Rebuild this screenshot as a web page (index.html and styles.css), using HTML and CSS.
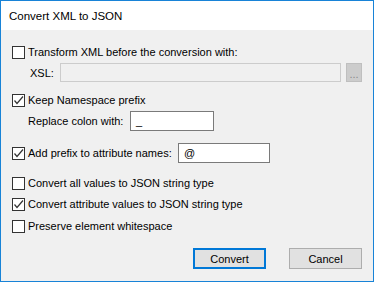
FILE: index.html
```html
<!DOCTYPE html>
<html lang="en">
<head>
  <meta charset="UTF-8" />
  <title>Convert XML to JSON</title>
  <link rel="stylesheet" href="styles.css">
</head>
<body>

  <div class="window">
    <div class="title-bar">Convert XML to JSON</div>

    <div class="content">
      <div class="row row-transform">
        <span class="check"></span>
        <span>Transform XML before the conversion with:</span>
      </div>

      <div class="row row-xsl">
        <span class="xsl-label">XSL:</span>
        <span class="field field-disabled"></span>
        <span class="browse-btn">...</span>
      </div>

      <div class="row row-keep">
        <span class="check checked">
          <svg width="11" height="11" viewBox="0 0 11 11"><path d="M1.5 5.5 L4 8.5 L10 1.5" fill="none" stroke="#333" stroke-width="1.2"/></svg>
        </span>
        <span>Keep Namespace prefix</span>
      </div>

      <div class="row row-replace">
        <span class="replace-label">Replace colon with:</span>
        <span class="field field-colon">_</span>
      </div>

      <div class="row row-prefix">
        <span class="check checked">
          <svg width="11" height="11" viewBox="0 0 11 11"><path d="M1.5 5.5 L4 8.5 L10 1.5" fill="none" stroke="#333" stroke-width="1.2"/></svg>
        </span>
        <span class="prefix-label">Add prefix to attribute names:</span>
        <span class="field field-prefix">@</span>
      </div>

      <div class="row row-all">
        <span class="check"></span>
        <span>Convert all values to JSON string type</span>
      </div>

      <div class="row row-attr">
        <span class="check checked">
          <svg width="11" height="11" viewBox="0 0 11 11"><path d="M1.5 5.5 L4 8.5 L10 1.5" fill="none" stroke="#333" stroke-width="1.2"/></svg>
        </span>
        <span>Convert attribute values to JSON string type</span>
      </div>

      <div class="row row-space">
        <span class="check"></span>
        <span>Preserve element whitespace</span>
      </div>

      <div class="button-group">
        <button class="btn default-btn">Convert</button>
        <button class="btn">Cancel</button>
      </div>
    </div>
  </div>

</body>
</html>
```

FILE: styles.css
```css
body {
  margin: 0;
  font-family: "Liberation Sans", Arial, sans-serif;
  font-size: 11px;
  color: #000000;
}

.window {
  width: 374px;
  height: 282px;
  box-sizing: border-box;
  border: 1px solid #1883d7;
  background-color: #f0f0f0;
  display: flex;
  flex-direction: column;
}

.title-bar {
  height: 29px;
  background-color: #ffffff;
  padding-left: 8px;
  display: flex;
  align-items: center;
  font-size: 11.5px;
}

.content {
  padding: 0 11px 0 11px;
  display: flex;
  flex-direction: column;
}

.row {
  display: flex;
  align-items: center;
  height: 20px;
  white-space: nowrap;
}

.check {
  width: 13px;
  height: 13px;
  box-sizing: border-box;
  border: 1px solid #333333;
  background-color: #ffffff;
  margin-right: 3px;
  display: flex;
  align-items: center;
  justify-content: center;
  flex-shrink: 0;
}

.row-transform {
  margin-top: 12px;
}

.row-xsl {
  margin-top: 1px;
  height: 19px;
}

.xsl-label {
  margin-left: 18px;
  width: 30px;
}

.field {
  box-sizing: border-box;
  height: 100%;
  border: 1px solid #7a7a7a;
  background-color: #ffffff;
  padding-left: 5px;
  display: flex;
  align-items: center;
  flex-shrink: 0;
}

.field-disabled {
  width: 281px;
  border-color: #cccccc;
  background-color: #f0f0f0;
}

.browse-btn {
  width: 16px;
  height: 19px;
  box-sizing: border-box;
  margin-left: 5px;
  background-color: #cccccc;
  border: 1px solid #bfbfbf;
  color: #8a8a8a;
  font-size: 11px;
  display: flex;
  align-items: center;
  justify-content: center;
  padding-top: 3px;
  flex-shrink: 0;
}

.row-keep {
  margin-top: 8px;
}

.row-replace {
  margin-top: 1px;
}

.replace-label {
  margin-left: 16px;
  width: 102px;
}

.field-colon {
  width: 84px;
}

.row-prefix {
  margin-top: 12px;
}

.prefix-label {
  width: 150px;
}

.field-prefix {
  width: 92px;
}

.row-all {
  margin-top: 10px;
}

.row-attr {
  margin-top: 1px;
}

.row-space {
  margin-top: 2px;
}

.button-group {
  display: flex;
  justify-content: flex-end;
  gap: 23px;
  margin-top: 12px;
}

.btn {
  width: 73px;
  height: 21px;
  box-sizing: border-box;
  border: 1px solid #adadad;
  background-color: #e1e1e1;
  font-family: "Liberation Sans", Arial, sans-serif;
  font-size: 11px;
  padding: 0;
  color: #000000;
}

.default-btn {
  border: 2px solid #0078d7;
}
```
